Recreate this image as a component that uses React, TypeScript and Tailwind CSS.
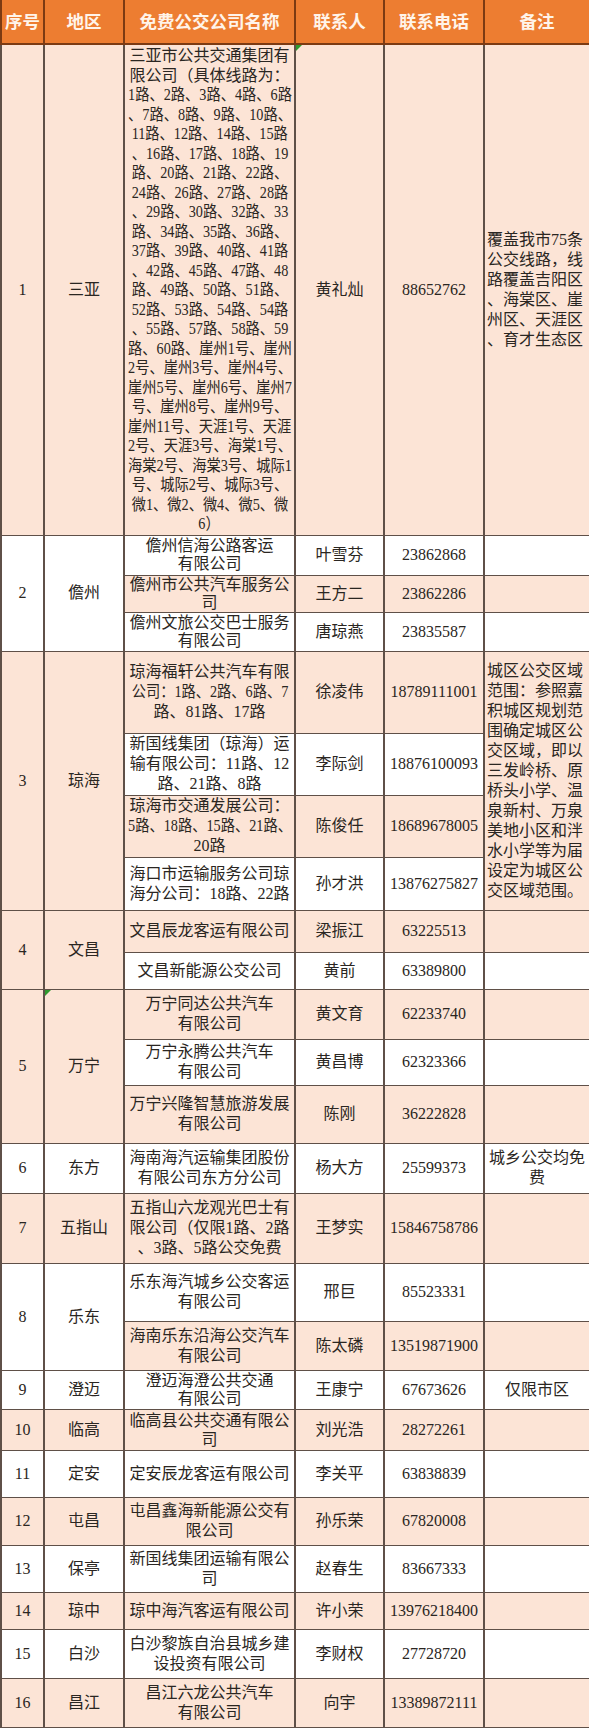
import React from "react";

type Note = { lines: string[]; align: string; lh: string };

type Sub = {
  h: string;
  bg: "p" | "w";
  lines: string[];
  sq?: number; // lines from this index on are squeezed
  sqAt?: number[]; // single lines to squeeze
  lh?: string;
  contact: string;
  phone: string;
  note?: Note;
};

type Group = {
  seq: string;
  region: string;
  bg: "p" | "w";
  mark?: "region" | "contact";
  merged?: Note;
  subs: Sub[];
};

const BG = { p: "bg-[#fce4d6]", w: "bg-white" };
const CELL = "border-x-2 border-y border-[#5f5048] p-0 align-middle";

const groups: Group[] = [
  {
    seq: "1",
    region: "三亚",
    bg: "p",
    mark: "contact",
    subs: [
      {
        h: "h-[491px]",
        bg: "p",
        lh: "leading-[19.5px]",
        sq: 2,
        lines: [
          "三亚市公共交通集团有",
          "限公司（具体线路为：",
          "1路、2路、3路、4路、6路",
          "、7路、8路、9路、10路、",
          "11路、12路、14路、15路",
          "、16路、17路、18路、19",
          "路、20路、21路、22路、",
          "24路、26路、27路、28路",
          "、29路、30路、32路、33",
          "路、34路、35路、36路、",
          "37路、39路、40路、41路",
          "、42路、45路、47路、48",
          "路、49路、50路、51路、",
          "52路、53路、54路、54路",
          "、55路、57路、58路、59",
          "路、60路、崖州1号、崖州",
          "2号、崖州3号、崖州4号、",
          "崖州5号、崖州6号、崖州7",
          "号、崖州8号、崖州9号、",
          "崖州11号、天涯1号、天涯",
          "2号、天涯3号、海棠1号、",
          "海棠2号、海棠3号、城际1",
          "号、城际2号、城际3号、",
          "微1、微2、微4、微5、微",
          "6）",
        ],
        contact: "黄礼灿",
        phone: "88652762",
        note: {
          lines: ["覆盖我市75条", "公交线路，线", "路覆盖吉阳区", "、海棠区、崖", "州区、天涯区", "、育才生态区"],
          align: "text-left",
          lh: "leading-[20px]",
        },
      },
    ],
  },
  {
    seq: "2",
    region: "儋州",
    bg: "w",
    subs: [
      { h: "h-[40px]", bg: "w", lh: "leading-[18px]", lines: ["儋州信海公路客运", "有限公司"], contact: "叶雪芬", phone: "23862868" },
      { h: "h-[37px]", bg: "p", lh: "leading-[18px]", lines: ["儋州市公共汽车服务公", "司"], contact: "王方二", phone: "23862286" },
      { h: "h-[39px]", bg: "w", lh: "leading-[18px]", lines: ["儋州文旅公交巴士服务", "有限公司"], contact: "唐琼燕", phone: "23835587" },
    ],
  },
  {
    seq: "3",
    region: "琼海",
    bg: "p",
    merged: {
      lines: [
        "城区公交区域",
        "范围：参照嘉",
        "积城区规划范",
        "围确定城区公",
        "交区域，即以",
        "三发岭桥、原",
        "桥头小学、温",
        "泉新村、万泉",
        "美地小区和泮",
        "水小学等为届",
        "设定为城区公",
        "交区域范围。",
      ],
      align: "text-left",
      lh: "leading-[20px]",
    },
    subs: [
      { h: "h-[82px]", bg: "p", sqAt: [1], lines: ["琼海福轩公共汽车有限", "公司：1路、2路、6路、7", "路、81路、17路"], contact: "徐凌伟", phone: "18789111001" },
      { h: "h-[62px]", bg: "w", lines: ["新国线集团（琼海）运", "输有限公司：11路、12", "路、21路、8路"], contact: "李际剑", phone: "18876100093" },
      { h: "h-[62px]", bg: "p", sqAt: [1], lines: ["琼海市交通发展公司：", "5路、18路、15路、21路、", "20路"], contact: "陈俊任", phone: "18689678005" },
      { h: "h-[53px]", bg: "w", lines: ["海口市运输服务公司琼", "海分公司：18路、22路"], contact: "孙才洪", phone: "13876275827" },
    ],
  },
  {
    seq: "4",
    region: "文昌",
    bg: "p",
    subs: [
      { h: "h-[42px]", bg: "p", lines: ["文昌辰龙客运有限公司"], contact: "梁振江", phone: "63225513" },
      { h: "h-[37px]", bg: "w", lines: ["文昌新能源公交公司"], contact: "黄前", phone: "63389800" },
    ],
  },
  {
    seq: "5",
    region: "万宁",
    bg: "p",
    mark: "region",
    subs: [
      { h: "h-[50px]", bg: "p", lines: ["万宁同达公共汽车", "有限公司"], contact: "黄文育", phone: "62233740" },
      { h: "h-[46px]", bg: "w", lines: ["万宁永腾公共汽车", "有限公司"], contact: "黄昌博", phone: "62323366" },
      { h: "h-[58px]", bg: "p", lines: ["万宁兴隆智慧旅游发展", "有限公司"], contact: "陈刚", phone: "36222828" },
    ],
  },
  {
    seq: "6",
    region: "东方",
    bg: "w",
    subs: [
      {
        h: "h-[50px]",
        bg: "w",
        lines: ["海南海汽运输集团股份", "有限公司东方分公司"],
        contact: "杨大方",
        phone: "25599373",
        note: { lines: ["城乡公交均免", "费"], align: "text-center", lh: "leading-[20px]" },
      },
    ],
  },
  {
    seq: "7",
    region: "五指山",
    bg: "p",
    subs: [
      { h: "h-[70px]", bg: "p", lines: ["五指山六龙观光巴士有", "限公司（仅限1路、2路", "、3路、5路公交免费"], contact: "王梦实", phone: "15846758786" },
    ],
  },
  {
    seq: "8",
    region: "乐东",
    bg: "w",
    subs: [
      { h: "h-[58px]", bg: "w", lines: ["乐东海汽城乡公交客运", "有限公司"], contact: "邢巨", phone: "85523331" },
      { h: "h-[49px]", bg: "p", lines: ["海南乐东沿海公交汽车", "有限公司"], contact: "陈太磷", phone: "13519871900" },
    ],
  },
  {
    seq: "9",
    region: "澄迈",
    bg: "w",
    subs: [
      {
        h: "h-[39px]",
        bg: "w",
        lh: "leading-[18px]",
        lines: ["澄迈海澄公共交通", "有限公司"],
        contact: "王康宁",
        phone: "67673626",
        note: { lines: ["仅限市区"], align: "text-center", lh: "leading-[20px]" },
      },
    ],
  },
  {
    seq: "10",
    region: "临高",
    bg: "p",
    subs: [{ h: "h-[41px]", bg: "p", lh: "leading-[19px]", lines: ["临高县公共交通有限公", "司"], contact: "刘光浩", phone: "28272261" }],
  },
  {
    seq: "11",
    region: "定安",
    bg: "w",
    subs: [{ h: "h-[47px]", bg: "w", lines: ["定安辰龙客运有限公司"], contact: "李关平", phone: "63838839" }],
  },
  {
    seq: "12",
    region: "屯昌",
    bg: "p",
    subs: [{ h: "h-[48px]", bg: "p", lines: ["屯昌鑫海新能源公交有", "限公司"], contact: "孙乐荣", phone: "67820008" }],
  },
  {
    seq: "13",
    region: "保亭",
    bg: "w",
    subs: [{ h: "h-[47px]", bg: "w", lines: ["新国线集团运输有限公", "司"], contact: "赵春生", phone: "83667333" }],
  },
  {
    seq: "14",
    region: "琼中",
    bg: "p",
    subs: [{ h: "h-[37px]", bg: "p", lines: ["琼中海汽客运有限公司"], contact: "许小荣", phone: "13976218400" }],
  },
  {
    seq: "15",
    region: "白沙",
    bg: "w",
    subs: [{ h: "h-[49px]", bg: "w", lines: ["白沙黎族自治县城乡建", "设投资有限公司"], contact: "李财权", phone: "27728720" }],
  },
  {
    seq: "16",
    region: "昌江",
    bg: "p",
    subs: [{ h: "h-[49px]", bg: "p", lines: ["昌江六龙公共汽车", "有限公司"], contact: "向宇", phone: "13389872111" }],
  },
];

const headers = ["序号", "地区", "免费公交公司名称", "联系人", "联系电话", "备注"];

function Mark() {
  return (
    <span className="absolute left-0 top-0 h-0 w-0 border-t-[6px] border-r-[6px] border-t-[#2f9a2f] border-r-transparent" />
  );
}

function Line({ t, sq }: { t: string; sq?: boolean }) {
  return (
    <div className="flex justify-center whitespace-nowrap">
      <span className={sq ? "inline-block scale-x-[0.89]" : "inline-block"}>{t}</span>
    </div>
  );
}

function NoteText({ note }: { note: Note }) {
  return (
    <div className={`${note.align} ${note.lh} whitespace-nowrap px-[2px]`}>
      {note.lines.map((l, i) => (
        <div key={i}>{l}</div>
      ))}
    </div>
  );
}

export default function App() {
  return (
    <div className="min-h-screen bg-white font-['Liberation_Serif','Noto_Sans_CJK_SC',serif] text-[16px] text-[#2a2622]">
      <table className="w-[589px] table-fixed border-collapse">
        <colgroup>
          <col className="w-[43px]" />
          <col className="w-[80px]" />
          <col className="w-[171px]" />
          <col className="w-[89px]" />
          <col className="w-[100px]" />
          <col className="w-[106px]" />
        </colgroup>
        <thead>
          <tr className="h-[44px] bg-[#ed7d31]">
            {headers.map((h) => (
              <th
                key={h}
                className="whitespace-nowrap border-x-2 border-b-2 border-[#7c3a12] p-0 text-center font-['Noto_Sans_CJK_SC',sans-serif] text-[17.5px] font-bold text-[#fff4ea]"
              >
                {h}
              </th>
            ))}
          </tr>
        </thead>
        <tbody>
          {groups.flatMap((g) =>
            g.subs.map((s, i) => (
              <tr key={`${g.seq}-${i}`} className={s.h}>
                {i === 0 && (
                  <td rowSpan={g.subs.length} className={`${CELL} ${BG[g.bg]} text-center`}>
                    {g.seq}
                  </td>
                )}
                {i === 0 && (
                  <td rowSpan={g.subs.length} className={`${CELL} ${BG[g.bg]} relative text-center`}>
                    {g.mark === "region" && <Mark />}
                    {g.region}
                  </td>
                )}
                <td className={`${CELL} ${BG[s.bg]} ${s.lh ?? "leading-[20px]"} overflow-hidden`}>
                  {s.lines.map((l, k) => (
                    <Line
                      key={k}
                      t={l}
                      sq={(s.sq !== undefined && k >= s.sq) || (s.sqAt ?? []).includes(k)}
                    />
                  ))}
                </td>
                <td className={`${CELL} ${BG[s.bg]} relative text-center`}>
                  {g.mark === "contact" && <Mark />}
                  {s.contact}
                </td>
                <td className={`${CELL} ${BG[s.bg]} text-center`}>{s.phone}</td>
                {g.merged ? (
                  i === 0 && (
                    <td rowSpan={g.subs.length} className={`${CELL} ${BG[g.bg]}`}>
                      <NoteText note={g.merged} />
                    </td>
                  )
                ) : (
                  <td className={`${CELL} ${BG[s.bg]}`}>{s.note && <NoteText note={s.note} />}</td>
                )}
              </tr>
            ))
          )}
        </tbody>
      </table>
    </div>
  );
}
